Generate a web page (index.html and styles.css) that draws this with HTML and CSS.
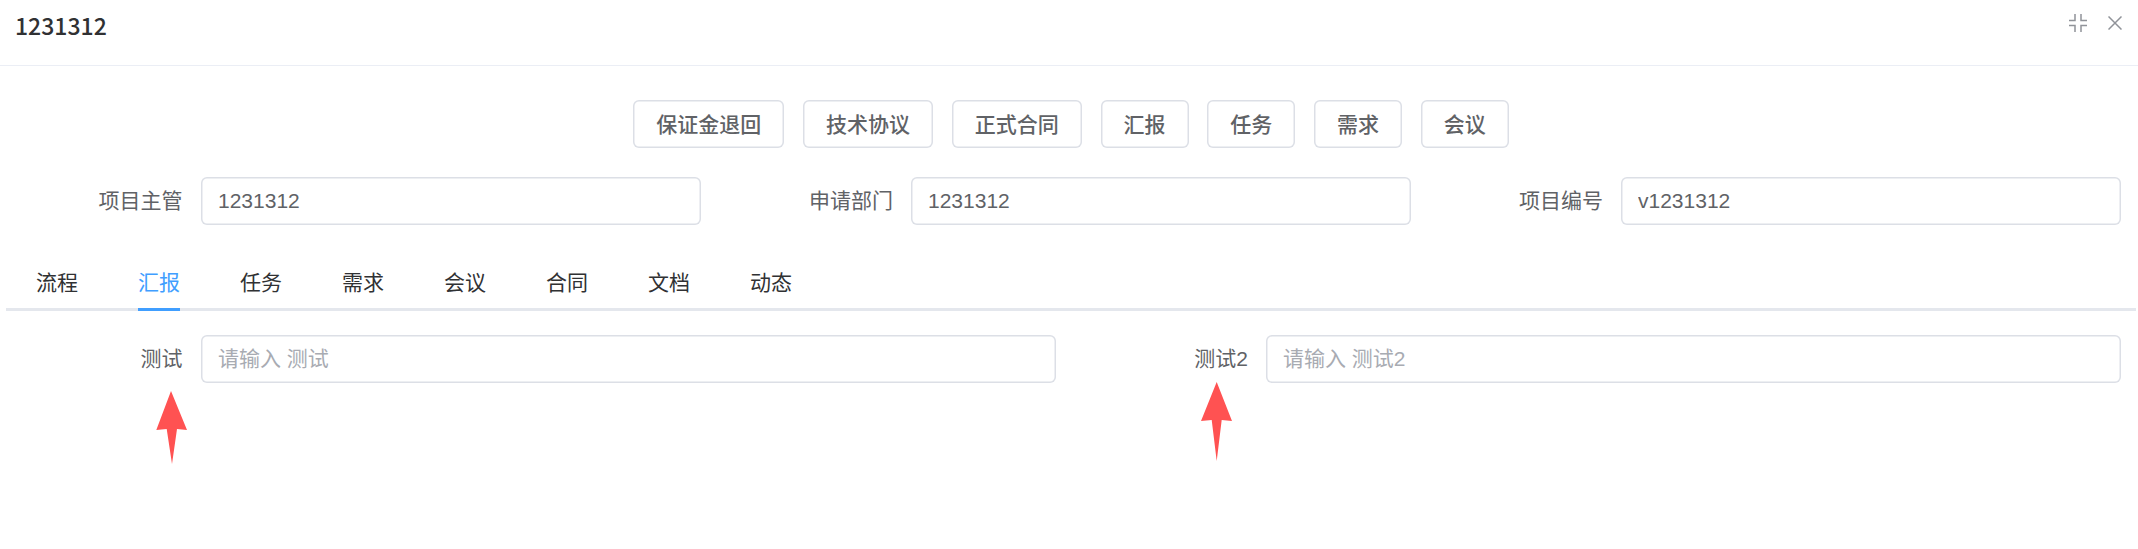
FILE: index.html
```html
<!DOCTYPE html>
<html lang="en">
  <head>
    <meta charset="UTF-8" />
    <title>1231312</title>
    <link rel="stylesheet" href="styles.css">
  </head>
  <body>
    <div class="dialog">
      <!-- Title bar -->
      <div class="dialog-header">
        <span class="dialog-title">1231312</span>
        <div class="dialog-tools">
          <svg class="tool-compress" width="18" height="18" viewBox="0 0 18 18">
            <path d="M0 6.5H6V0M18 6.5H12V0M0 11.5H6V18M18 11.5H12V18" />
          </svg>
          <svg class="tool-close" width="14" height="14" viewBox="0 0 14 14">
            <path d="M0.5 0.5L13.5 13.5M13.5 0.5L0.5 13.5" />
          </svg>
        </div>
      </div>

      <div class="dialog-body">
        <!-- Actions -->
        <div class="action-row">
          <button class="action-button">保证金退回</button>
          <button class="action-button">技术协议</button>
          <button class="action-button">正式合同</button>
          <button class="action-button">汇报</button>
          <button class="action-button">任务</button>
          <button class="action-button">需求</button>
          <button class="action-button">会议</button>
        </div>

        <!-- Project info -->
        <div class="form-row form-row-3">
          <div class="form-item">
            <label class="form-label">项目主管</label>
            <input class="form-input" type="text" value="1231312" />
          </div>
          <div class="form-item">
            <label class="form-label">申请部门</label>
            <input class="form-input" type="text" value="1231312" />
          </div>
          <div class="form-item">
            <label class="form-label">项目编号</label>
            <input class="form-input" type="text" value="v1231312" />
          </div>
        </div>

        <!-- Tabs -->
        <div class="tabs">
          <div class="tab">流程</div>
          <div class="tab tab-active">汇报</div>
          <div class="tab">任务</div>
          <div class="tab">需求</div>
          <div class="tab">会议</div>
          <div class="tab">合同</div>
          <div class="tab">文档</div>
          <div class="tab">动态</div>
        </div>

        <div class="form-row form-row-2">
          <div class="form-item">
            <label class="form-label">测试</label>
            <input class="form-input" type="text" placeholder="请输入 测试" />
            <svg class="mark mark-first" width="32" height="74" viewBox="0 0 32 74">
              <path fill="#ff5252" d="M16 0L32 39L22 38L17 73L11.7 38L1.3 39Z" />
            </svg>
          </div>
          <div class="form-item">
            <label class="form-label">测试2</label>
            <input class="form-input" type="text" placeholder="请输入 测试2" />
            <svg class="mark mark-second" width="32" height="80" viewBox="0 0 32 80">
              <path fill="#ff5252" d="M15.7 0L31 39L20.7 38L15.7 79L10.7 38L0 39Z" />
            </svg>
          </div>
        </div>
      </div>
    </div>
  </body>
</html>
```

FILE: styles.css
```css
* {
  margin: 0;
  padding: 0;
  box-sizing: border-box;
}
body {
  font-family: "Liberation Sans", "Noto Sans CJK SC", sans-serif;
  font-size: 21px;
  color: #606266;
  background-color: #ffffff;
}
.dialog {
  min-height: 549px;
}

/* Title bar */
.dialog-header {
  display: flex;
  justify-content: space-between;
  height: 66px;
  padding: 14px 16px 0 15px;
  border-bottom: 1px solid #ebeef5;
}
.dialog-title {
  font-family: "Noto Sans CJK SC", sans-serif;
  font-size: 23px;
  line-height: 22px;
  font-weight: 500;
  color: #303133;
}
.dialog-tools {
  display: flex;
  gap: 21px;
}
.dialog-tools svg {
  fill: none;
  stroke: #909399;
  stroke-width: 1.5;
}
.tool-close {
  margin-top: 2px;
}

/* Body */
.dialog-body {
  padding: 34px 17px 0 6px;
}
.action-row {
  display: flex;
  justify-content: center;
  gap: 18.75px;
  padding-left: 15px;
}
.action-button {
  height: 48px;
  padding: 0 23px 2px;
  font-family: inherit;
  font-size: 21px;
  font-weight: 500;
  color: #606266;
  background-color: #ffffff;
  border: none;
  border-radius: 6px;
  box-shadow: inset 0 0 0 1.5px #dcdfe6;
}

/* Form rows */
.form-row {
  display: grid;
  column-gap: 15px;
}
.form-row-3 {
  grid-template-columns: repeat(3, 1fr);
  margin-top: 29px;
}
.form-row-2 {
  grid-template-columns: repeat(2, 1fr);
  margin-top: 24px;
}
.form-item {
  position: relative;
  display: flex;
  align-items: center;
}
.form-label {
  flex: 0 0 195px;
  padding: 0 18.5px 4px 0;
  text-align: right;
}
.form-item + .form-item .form-label {
  padding-right: 18px;
}
.form-input {
  flex: 1;
  min-width: 0;
  height: 48px;
  padding: 0 17px;
  font-family: inherit;
  font-size: 21px;
  color: #606266;
  border: none;
  border-radius: 6px;
  box-shadow: inset 0 0 0 1.5px #dcdfe6;
  outline: none;
}
.form-input::placeholder {
  color: #a8abb2;
}

/* Tabs */
.tabs {
  display: flex;
  gap: 60px;
  height: 62px;
  margin: 24px -15px 0 0;
  padding-left: 30px;
  border-bottom: 3px solid #e4e7ed;
}
.tab {
  height: 62px;
  padding-top: 22px;
  line-height: 24px;
  color: #303133;
}
.tab-active {
  color: #409eff;
  border-bottom: 3px solid #409eff;
}

/* Red marks drawn over the form */
.mark {
  position: absolute;
}
.mark-first {
  left: 149px;
  top: 56px;
}
.mark-second {
  left: 130px;
  top: 47px;
}
```
